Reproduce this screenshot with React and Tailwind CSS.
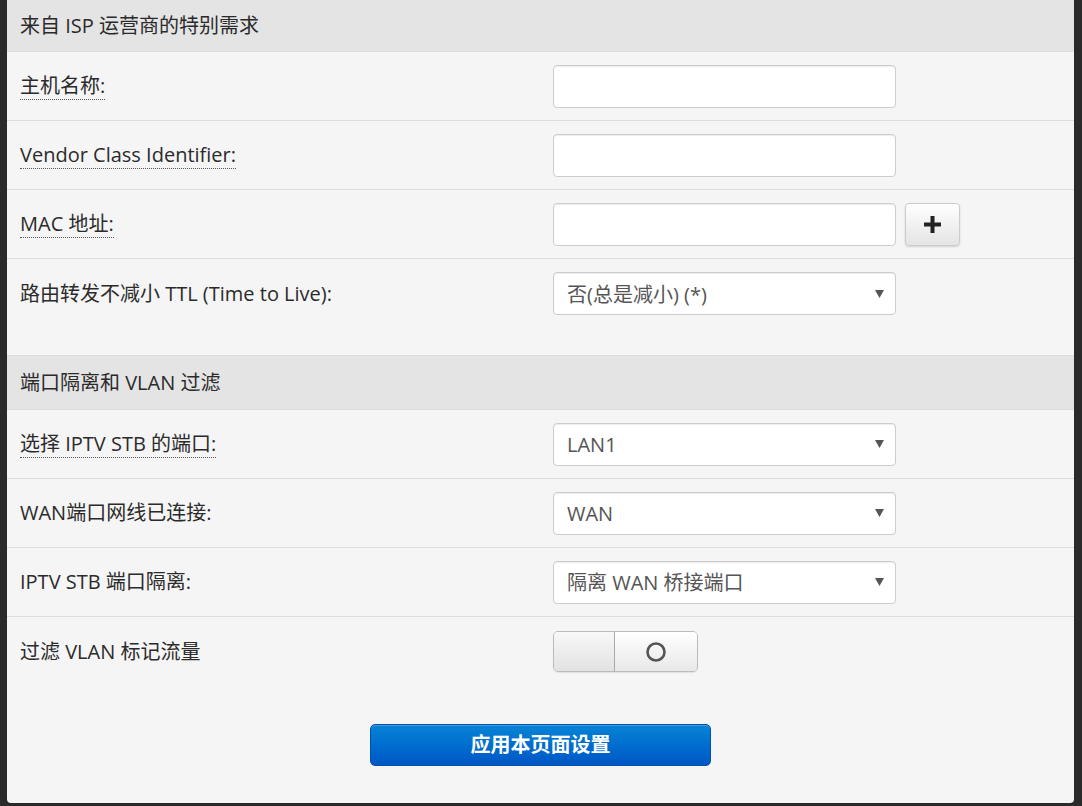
import React from "react";

const FONT = { fontFamily: '"Open Sans", "Noto Sans CJK SC", sans-serif' };

function Label({ children, dotted }) {
  return (
    <div className="w-[546px] shrink-0 pl-[13px] text-[20px] text-[#2b2b2b]">
      {dotted ? (
        <span className="border-b border-dotted border-[#555]">{children}</span>
      ) : (
        <span>{children}</span>
      )}
    </div>
  );
}

function Input() {
  return (
    <div className="w-[343px] h-[43px] bg-white border border-[#ccc] rounded-[4px] shadow-[inset_0_1px_1px_rgba(0,0,0,0.075)]" />
  );
}

function Select({ value }) {
  return (
    <div className="w-[343px] h-[43px] bg-white border border-[#ccc] rounded-[4px] shadow-[inset_0_1px_1px_rgba(0,0,0,0.075)] flex items-center justify-between pl-[13px] pr-[11px]">
      <span className="text-[20px] text-[#555] pt-[2px]">{value}</span>
      <svg width="9" height="8" viewBox="0 0 9 8">
        <polygon points="0,0 9,0 4.5,8" fill="#555" />
      </svg>
    </div>
  );
}

function Row({ label, dotted, children, last, tall }) {
  return (
    <div
      className={
        "flex " +
        (tall ? "h-[97px] items-start pt-[13px] " : "h-[69px] items-center ") +
        (last ? "" : "border-b border-[#ddd]")
      }
    >
      <div className={tall ? "flex items-center h-[43px]" : ""}>
        <Label dotted={dotted}>{label}</Label>
      </div>
      <div className="flex items-center">{children}</div>
    </div>
  );
}

function Header({ children, h }) {
  return (
    <div className={"flex items-center bg-[#e4e4e4] border-b border-[#ddd] pl-[13px] text-[20px] text-[#2b2b2b] " + h}>
      {children}
    </div>
  );
}

export default function App() {
  return (
    <div className="w-[1082px] h-[806px] bg-[#2a2a2a] pl-[7px] pr-[8px]" style={FONT}>
      <div className="h-[803px] bg-[#f5f5f5] rounded-b-[4px] flex flex-col">
        <Header h="h-[52px]">来自 ISP 运营商的特别需求</Header>
        <Row label="主机名称:" dotted>
          <Input />
        </Row>
        <Row label="Vendor Class Identifier:" dotted>
          <Input />
        </Row>
        <Row label="MAC 地址:" dotted>
          <Input />
          <div className="ml-[9px] w-[55px] h-[43px] rounded-[4px] border border-[#ccc] bg-gradient-to-b from-white to-[#e4e4e4] shadow-[0_1px_2px_rgba(0,0,0,0.15)] flex items-center justify-center">
            <svg width="17" height="17" viewBox="0 0 17 17">
              <rect x="6.5" y="0" width="4" height="17" fill="#222" />
              <rect x="0" y="6.5" width="17" height="4" fill="#222" />
            </svg>
          </div>
        </Row>
        <Row label="路由转发不减小 TTL (Time to Live):" tall>
          <Select value="否(总是减小) (*)" />
        </Row>
        <Header h="h-[54px]">端口隔离和 VLAN 过滤</Header>
        <Row label="选择 IPTV STB 的端口:" dotted>
          <Select value="LAN1" />
        </Row>
        <Row label="WAN端口网线已连接:">
          <Select value="WAN" />
        </Row>
        <Row label="IPTV STB 端口隔离:">
          <Select value="隔离 WAN 桥接端口" />
        </Row>
        <Row label="过滤 VLAN 标记流量" last>
          <div className="w-[145px] h-[41px] rounded-[5px] border border-[#bbb] flex overflow-hidden shadow-[0_1px_1px_rgba(0,0,0,0.08)]">
            <div className="w-[61px] h-full bg-gradient-to-b from-[#f8f8f8] to-[#e2e2e2] border-r border-[#aaa]" />
            <div className="flex-1 h-full bg-gradient-to-b from-white to-[#e8e8e8] flex items-center justify-center">
              <svg width="22" height="22" viewBox="0 0 22 22">
                <circle cx="11" cy="11" r="8.5" fill="none" stroke="#555" strokeWidth="2.6" />
              </svg>
            </div>
          </div>
        </Row>
        <div className="flex justify-center mt-[38px]">
          <div className="w-[341px] h-[42px] rounded-[5px] border border-[#0052a8] bg-gradient-to-b from-[#0a84d6] to-[#0056c6] flex items-center justify-center text-white font-bold text-[20px] shadow-[inset_0_1px_0_rgba(255,255,255,0.2)]">
            应用本页面设置
          </div>
        </div>
      </div>
    </div>
  );
}
